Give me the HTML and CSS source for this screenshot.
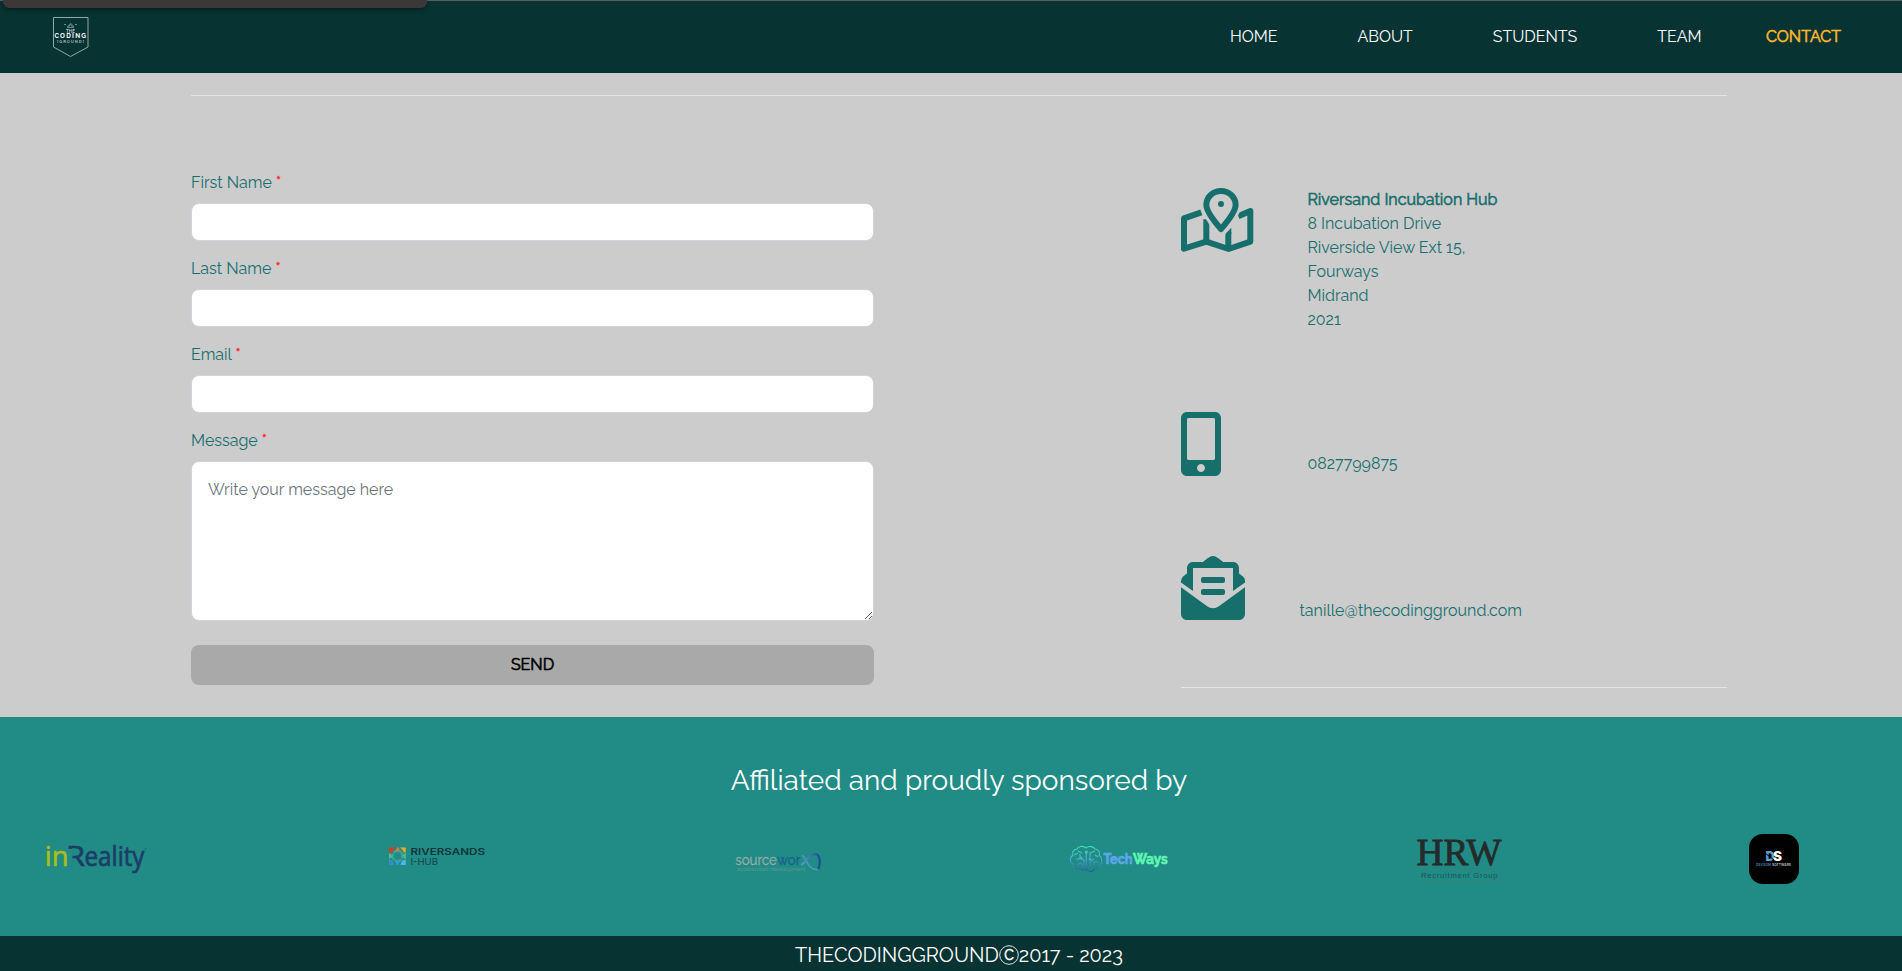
FILE: index.html
```html
<!DOCTYPE html>
<html lang="en">
<head>
<meta charset="utf-8">
<title>The Coding Ground - Contact</title>
<link rel="stylesheet" href="styles.css">
</head>
<body>
<div class="status-bubble"></div>
<header class="nav">
  <svg class="brand" viewBox="0 0 36 41" width="36" height="41">
    <path d="M.5.5h34.500v29.500L17.500 39.500.5 30z" fill="none" stroke="#8fa9a8"/>
    <path d="M14.500 10.500c0-2 1.500-2.500 3.200-4 1.500 1.500 3 2 3 4zM11 7.500h2M22 7.500h2M15.500 10l2-2.500 2 2.500" fill="none" stroke="#86a3a2" stroke-width=".8"/>
    <text x="13" y="15.500" font-size="4.500" font-weight="700" textLength="9" fill="#b5c6c5">THE</text>
    <text x="1.500" y="21.200" font-size="6.400" font-weight="700" textLength="31.500" fill="#fff">CODING</text>
    <text x="4" y="26" font-size="4" font-weight="700" textLength="27" fill="#a9bcbb">[GROUND]</text>
  </svg>
  <nav class="links">
    <a class="l-home">HOME</a><a class="l-about">ABOUT</a><a class="l-students">STUDENTS</a><a class="l-team">TEAM</a><a class="l-contact">CONTACT</a>
  </nav>
</header>
<main class="contact">
  <hr class="rule">
  <div class="columns">
    <form class="form">
      <div class="field"><label>First Name <i>*</i></label><input class="input" type="text"></div>
      <div class="field"><label>Last Name <i>*</i></label><input class="input" type="text"></div>
      <div class="field"><label>Email <i>*</i></label><input class="input" type="text"></div>
      <div class="field"><label>Message <i>*</i></label><textarea class="input area" placeholder="Write your message here"></textarea></div>
      <button class="send" type="button">SEND</button>
    </form>
    <div class="info">
      <div class="row row-address">
        <svg class="icon" viewBox="62 54 217 192" width="72.300" height="64">
          <g fill="none" stroke="#176f6c" stroke-width="18" stroke-linejoin="round">
            <path d="M123 127L71 145v91l67-21 67 22 65-22v-92l-36 16"/>
            <path d="M138 148v67M204 186v50"/>
          </g>
          <path d="M182 45c-34 0-61 27-61 60 0 22 25 60 49 89q12 13 25 0c24-29 48-67 48-89 0-33-27-60-61-60z" fill="#ccc"/>
          <path d="M182 63c-24 0-44 18-44 41 0 17 24 50 44 73 20-23 44-56 44-73 0-23-20-41-44-41z" fill="#ccc" stroke="#176f6c" stroke-width="18" stroke-linejoin="round"/>
          <path d="M195 192l18-19v20z" fill="#176f6c"/>
          <circle cx="182" cy="102" r="9" fill="#176f6c"/>
        </svg>
        <address class="address"><b>Riversand Incubation Hub</b><br>8 Incubation Drive<br>Riverside View Ext 15,<br>Fourways<br>Midrand<br>2021</address>
      </div>
      <div class="row row-phone">
        <svg class="icon" viewBox="0 0 320 512" width="40" height="64"><path fill="#176f6c" d="M272 0H48C21.500 0 0 21.500 0 48v416c0 26.500 21.500 48 48 48h224c26.500 0 48-21.500 48-48V48c0-26.500-21.500-48-48-48zM160 480c-17.700 0-32-14.300-32-32s14.300-32 32-32 32 14.300 32 32-14.300 32-32 32zm112-108c0 6.600-5.400 12-12 12H60c-6.600 0-12-5.400-12-12V60c0-6.600 5.400-12 12-12h200c6.600 0 12 5.400 12 12v312z"/></svg>
        <span class="phone">0827799875</span>
      </div>
      <div class="row row-mail">
        <svg class="icon" viewBox="0 0 512 512" width="64" height="64"><path fill="#176f6c" d="M176 216h160c8.840 0 16-7.160 16-16v-16c0-8.840-7.160-16-16-16H176c-8.840 0-16 7.160-16 16v16c0 8.840 7.160 16 16 16zm-16 80c0 8.840 7.160 16 16 16h160c8.840 0 16-7.160 16-16v-16c0-8.840-7.160-16-16-16H176c-8.840 0-16 7.160-16 16v16zm96 121.130c-16.420 0-32.840-5.060-46.860-15.190L0 250.860V464c0 26.510 21.490 48 48 48h416c26.510 0 48-21.490 48-48V250.860L302.860 401.940c-14.020 10.120-30.440 15.190-46.860 15.190zm237.610-254.180c-8.850-6.940-17.240-13.470-29.610-22.810V96c0-26.510-21.490-48-48-48h-77.550c-3.040-2.200-5.870-4.260-9.040-6.560C312.600 29.170 279.200-.35 256 0c-23.200-.35-56.590 29.170-73.410 41.440-3.170 2.300-6 4.360-9.040 6.560H96c-26.510 0-48 21.490-48 48v44.140c-12.370 9.330-20.760 15.870-29.610 22.810A47.995 47.995 0 0 0 0 200.720v10.650l96 69.350V96h320v184.720l96-69.350v-10.650c0-14.740-6.780-28.670-18.390-37.770z"/></svg>
        <span class="mail">tanille@thecodingground.com</span>
      </div>
      <hr class="rule">
    </div>
  </div>
</main>
<section class="sponsors">
  <h2 class="title">Affiliated and proudly sponsored by</h2>
  <div class="logos">
    <svg class="logo" viewBox="0 0 100 80">
      <g font-family="Open Sans" font-size="27.500" stroke-width=".7">
        <text x="-1.200" y="45.700" textLength="23.500" lengthAdjust="spacingAndGlyphs" fill="#a9bd17" stroke="#a9bd17">in</text>
        <text x="20" y="45.700" textLength="19" lengthAdjust="spacingAndGlyphs" fill="#1b3d68" stroke="#1b3d68">R</text>
        <rect x="21.500" y="29" width="5" height="17.500" fill="#218b86"/>
        <text x="38.500" y="45.700" font-size="26.500" textLength="60" lengthAdjust="spacingAndGlyphs" fill="#1b3d68" stroke="#1b3d68">eality</text>
      </g>
      <circle cx="99.700" cy="29" r="1" fill="#286a7b"/>
    </svg>
    <svg class="logo" viewBox="0 0 100 80">
      <path d="M2 27.500h7l-2.500 2.500-2 2.500H2z" fill="#d43a24"/><path d="M8 32l2.800-4.500L13.500 32l-2.700-1.500z" fill="#e77a3d" stroke="#e77a3d"/><path d="M18.800 27.500H13l2.500 2.500 1.500 2.500h1.800z" fill="#f5aa1d"/>
      <path d="M2 33l5 3-5 3zM18.800 33l-5 3 5 3z" fill="#54b99d"/><circle cx="10.500" cy="36" r="5" fill="none" stroke="#46a58d" stroke-width="2.500" stroke-dasharray="2.500 1.300"/>
      <path d="M2 45v-5.500l3.500 1L7.500 45z" fill="#378dc2"/><path d="M7.500 40l3 1.500 3-1.500-3 5z" fill="#3a9bd0" stroke="#3a9bd0"/><path d="M18.800 45v-5.500l-3.500 1-2 4.500z" fill="#4eb7e4"/>
      <text x="23.500" y="34.700" font-family="Inter" font-weight="600" font-size="9.600" textLength="74.500" lengthAdjust="spacingAndGlyphs" fill="#12353a">RIVERSANDS</text>
      <text x="23.500" y="44.700" font-family="Inter" font-size="9" textLength="27.500" lengthAdjust="spacingAndGlyphs" fill="#174348">I-HUB</text>
    </svg>
    <svg class="logo" viewBox="0 0 100 80">
      <defs><linearGradient id="orbit"><stop offset="0" stop-color="#579fd2"/><stop offset="1" stop-color="#174e91"/></linearGradient></defs>
      <g font-family="Raleway">
        <text x="7.300" y="45" font-size="14.500" textLength="41.500" lengthAdjust="spacingAndGlyphs" fill="#9aaca9" stroke="#9aaca9" stroke-width=".3">source</text>
        <text x="49.300" y="45" font-size="14.500" textLength="23" lengthAdjust="spacingAndGlyphs" fill="#17628a" stroke="#17628a" stroke-width=".3">wor</text>
        <text x="8.700" y="50.500" font-size="5.500" textLength="69" lengthAdjust="spacingAndGlyphs" fill="#6c9996">accelerated development</text>
      </g>
      <path d="M74 35.500c3 .5 4 8 9 12 2 1.600 4 2.200 6.500 2.200" fill="none" stroke="#5199ca" stroke-width="1.400"/>
      <path d="M73.500 45C78 42 81 34.500 87 34c4.500 0 6 7 3.500 15" fill="none" stroke="url(#orbit)" stroke-width="2"/>
    </svg>
    <svg class="logo" viewBox="0 0 100 80">
      <defs><linearGradient id="brain" x1="0" x2="0" y1="26" y2="51" gradientUnits="userSpaceOnUse"><stop offset="0" stop-color="#45e0ad"/><stop offset=".55" stop-color="#51a9ce"/><stop offset="1" stop-color="#255f9a"/></linearGradient></defs>
      <g fill="none" stroke="url(#brain)" stroke-width="1.100">
        <path d="M17 28c-3-2.500-8-2-9 1-4 .5-5 4-4 6-4 3-3 8 0 9 0 4 4 5 6 4 3 3 7 2 7-1M17 28c3-3 8-1 9 1 4 0 5 4 4 6 4 3 3 8 1 10-1 3-4 3-5 3-2 5-8 4-9-1M17.300 33v18"/>
        <path d="M7 39h4v-5M5 35l4-2M11 43l4 3v-6l-3-2M9 31l4 2M21 49v-7l4-3M21 37v-4l5-2M25 45v-3h4M26 35l3 2M8 45l3-2"/>
        <circle cx="17.300" cy="32" r="1"/><circle cx="21" cy="39" r="1"/><circle cx="12" cy="38" r="1"/>
      </g>
      <g font-family="Raleway" font-weight="700" font-size="14.500" stroke-width=".7"><text x="34.500" y="44.300" textLength="29" lengthAdjust="spacingAndGlyphs" fill="#5ba8e8" stroke="#5ba8e8">Tech</text><text x="64" y="44.300" textLength="34.500" lengthAdjust="spacingAndGlyphs" fill="#60f5b2" stroke="#60f5b2">Ways</text></g>
    </svg>
    <svg class="logo" viewBox="0 0 100 80">
      <text x="6.500" y="45" font-family="Liberation Serif" font-size="38" textLength="85" lengthAdjust="spacingAndGlyphs" fill="#242b2b" stroke="#242b2b" stroke-width=".8">HRW</text>
      <path d="M6.700 49.500h84.500M6.700 61.500h84.500" stroke="#3c8078" stroke-width=".7"/>
      <text x="11" y="58" font-family="Liberation Sans" font-size="7.600" textLength="76.500" fill="#1b5552">Recruitment Group</text>
    </svg>
    <svg class="logo" viewBox="0 0 100 80">
      <rect x="-2" y="14" width="50" height="50" rx="14" fill="#000"/>
      <text x="14.500" y="41" font-family="Inter" font-weight="900" font-size="13" textLength="9" lengthAdjust="spacingAndGlyphs" fill="#5f9dcd">D</text>
      <text x="22" y="41" font-family="Inter" font-weight="900" font-size="13" textLength="9" lengthAdjust="spacingAndGlyphs" fill="#fff">S</text>
      <path d="M14 33l9 7" stroke="#000" stroke-width="1"/>
      <g font-family="Inter" font-weight="600" font-size="3.600"><text x="5" y="46" textLength="15" lengthAdjust="spacingAndGlyphs" fill="#467ca8">DEVSOM</text><text x="21" y="46" textLength="19" lengthAdjust="spacingAndGlyphs" fill="#b9bdc0">SOFTWARE</text></g>
    </svg>
  </div>
</section>
<footer class="footer"><span>THECODINGGROUND</span><svg class="copy" viewBox="0 0 20 20" width="20" height="20"><circle cx="10" cy="10" r="9.300" fill="none" stroke="#dfe6e6" stroke-width="1"/><text x="10" y="14.800" text-anchor="middle" font-size="14" stroke="#fff" stroke-width=".5" fill="#fff">C</text></svg><span>2017 - 2023</span></footer>
</body>
</html>
```
FILE: styles.css
```css
* { box-sizing: border-box; }
html, body { margin: 0; height: 971px; overflow: hidden; }
body { background: #ccc; font: 16px/24px Raleway, Lato, sans-serif; color: #176f6c; display: flex; flex-direction: column; }
svg { display: block; overflow: visible; }
.status-bubble { position: absolute; left: 3px; top: 0; width: 424px; height: 8px; background: #3d3838; border-radius: 0 0 6px 6px; box-shadow: 0 1px 5px rgba(0,0,0,.5); }
.nav { flex: none; height: 73px; background: #073333; border-top: 1px solid #5e6060; display: flex; justify-content: space-between; align-items: flex-start; padding: 16px 61px 0 53px; }
.links { display: flex; padding-top: 8px; color: #fff; white-space: nowrap; }
.links a { flex: none; }
.l-home { width: 127.500px; } .l-about { width: 135.200px; } .l-students { width: 164.500px; } .l-team { width: 108.800px; }
.l-contact { width: 75px; color: #fbb62f; -webkit-text-stroke: .6px #fbb62f; }
.contact { flex: none; height: 644px; padding: 22px 175px 0 191px; }
.rule { margin: 0; border: 0; height: 1px; background: #e5e5e5; }
.columns { display: flex; justify-content: space-between; padding-top: 75px; }
.form { width: 683px; display: flex; flex-direction: column; }
.field { display: flex; flex-direction: column; gap: 8px; margin-bottom: 16px; }
.field label i { color: #ff2a2a; font-style: normal; -webkit-text-stroke: .3px #ff2a2a; }
.input { display: block; width: 100%; height: 38px; border: 1px solid #ced4da; border-radius: 8px; background: #fff; font: inherit; }
.area { height: 160px; padding: 16px; line-height: 24px; }
.area::placeholder { color: #6c757d; opacity: 1; }
.send { margin-top: 8px; height: 40px; border: 0; border-radius: 8px; background: #a9a9a9; color: #000; font: inherit; -webkit-text-stroke: .6px #000; }
.info { width: 546px; padding-top: 17px; }
.row { display: flex; align-items: flex-start; white-space: nowrap; }
.row-address { height: 224px; } .row-phone { height: 144px; } .row-mail { height: 131px; }
.row .icon { flex: none; }
.address { font-style: normal; margin: 0 0 0 54.200px; }
.address b { font-weight: 400; -webkit-text-stroke: .6px #176f6c; }
.phone { margin: 40px 0 0 86.500px; }
.mail { margin: 43px 0 0 54.500px; }
.sponsors { flex: none; height: 219px; background: #218b86; }
.title { margin: 0; padding: 45px 0 0 16px; font-size: 28px; line-height: 38px; font-weight: 400; text-align: center; color: #fff; }
.logos { display: grid; grid-template-columns: repeat(6, 341px); padding: 20px 0 0 46px; width: 1902px; }
.logo { width: 100px; height: 80px; }
.footer { flex: none; height: 35px; background: #073333; color: #fff; font-size: 20px; line-height: 38px; display: flex; justify-content: center; padding-left: 16px; white-space: nowrap; }
.copy { margin-top: 9px; }
```
